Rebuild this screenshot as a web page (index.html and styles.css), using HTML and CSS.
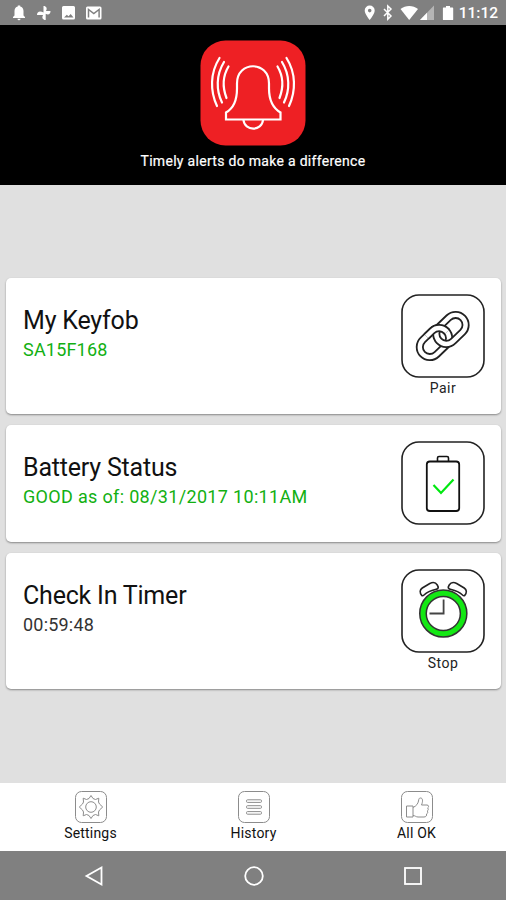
FILE: index.html
```html
<!DOCTYPE html>
<html lang="en">
  <head>
    <meta charset="UTF-8" />
    <title>Keyfob</title>
    <meta name="viewport" content="width=device-width, initial-scale=1.0" />
    <link rel="stylesheet" href="styles.css">
  </head>

  <body>
    <div class="statusbar">
      <svg width="110" height="25" viewBox="0 0 110 25" fill="#fff">
        <path d="M13 18V17l1.500-1.500v-4.500c0-2.300 1.200-4 3.300-4.500V5.500h2.400V6.500c2.100.5 3.300 2.200 3.300 4.500v4.500L25 17v1zM17.500 18.800h3a1.500 1.500 0 0 1-3 0z" />
        <path d="M43.500 12.500V6c3 0 4 2.500 2.500 5h4.500c0 3-2 4.300-4.800 2.800V20c-3 0-4.200-2.500-2.600-5H37c0-3 2.500-4.500 6.500-2.500z" />
        <path fill-rule="evenodd" d="M63.500 6h10q1.500 0 1.500 1.500v10.500q0 1.500-1.500 1.500h-10q-1.500 0-1.500-1.500V7.500q0-1.500 1.500-1.500zM64 17.500h9.500l-2.800-3.500-2.200 2.300-1.700-1.600z" />
        <rect x="86" y="6.500" width="15.500" height="13" rx="1.500" />
        <path d="M88.500 17.500v-8l5.300 4 5.300-4v8" fill="none" stroke="#808080" stroke-width="1.500" />
      </svg>
      <div class="statusbar-right">
        <svg width="96" height="25" viewBox="360 0 96 25" fill="#fff">
          <path fill-rule="evenodd" d="M369.700 5.500a5 5 0 0 1 5 5c0 3.500-5 9.500-5 9.500s-5-6-5-9.500a5 5 0 0 1 5-5zM369.700 8.800a1.800 1.800 0 1 0 0 3.600 1.800 1.800 0 0 0 0-3.600z" />
          <path d="M384 9l7 7-3.200 3.200V6l3.200 3-7 7" fill="none" stroke="#fff" stroke-width="1.500" />
          <path d="M400.500 9c5-4 12.500-4 17.500 0l-8.800 11z" />
          <path d="M434 5.500V20H420z" fill="#b5b5b5" />
          <path d="M427 12.700V20h-7z" />
          <path d="M443.500 7.500h2.500V6h4v1.500h2.500q.7 0 .7.700v11.200q0 .6-.7.600h-9q-.6 0-.6-.6V8.200q0-.7.600-.7z" />
        </svg>
        <span class="clock">11:12</span>
      </div>
    </div>

    <header class="header">
      <svg class="logo" width="106" height="106" viewBox="0 0 106 106">
        <rect x="0.500" y="0.500" width="105" height="105" rx="25" fill="#ee2024" />
        <g fill="none" stroke="#fff" stroke-width="2.200" stroke-linecap="round">
          <path d="M26 79.500v-7c9-5 11-14 11-24v-5c0-23 32-23 32 0v5c0 10 3 19 11.500 24v7z" stroke-linecap="butt" />
          <path d="M43.500 80c1 11.500 18.500 11.500 19.500 0" />
          <path d="M19.500 18c-9.500 15-9.500 33-2.500 48M24 22c-8 13-8 28-2 40.500M28.500 26.500c-6 10-6 21-2 31.500" />
          <path d="M86.500 18c9.500 15 9.500 33 2.500 48M82 22c8 13 8 28 2 40.500M77.500 26.500c6 10 6 21 2 31.500" />
        </g>
      </svg>
      <p>Timely alerts do make a difference</p>
    </header>

    <main class="content">
      <section class="card">
        <div class="info">
          <h2>My Keyfob</h2>
          <p class="green">SA15F168</p>
        </div>
        <button class="action">
          <svg width="84" height="84" viewBox="0 0 84 84" fill="none">
            <defs>
              <clipPath id="over">
                <rect x="-12" y="-20" width="30" height="20" />
              </clipPath>
            </defs>
            <rect class="frame" x="1" y="1" width="82" height="82" rx="17" />
            <g transform="translate(41.700 42) rotate(-44)">
              <g id="link">
                <rect class="outer" x="-27" y="-11" width="33" height="20" rx="10" />
                <rect class="inner" x="-27" y="-11" width="33" height="20" rx="10" />
              </g>
              <rect class="outer" x="-6" y="-9" width="33" height="20" rx="10" />
              <rect class="inner" x="-6" y="-9" width="33" height="20" rx="10" />
              <g clip-path="url(#over)"><use href="#link" /></g>
            </g>
          </svg>
          <span>Pair</span>
        </button>
      </section>

      <section class="card battery">
        <div class="info">
          <h2>Battery Status</h2>
          <p class="green date">GOOD as of: 08/31/2017 10:11AM</p>
        </div>
        <button class="action">
          <svg width="84" height="84" viewBox="0 0 84 84" fill="none">
            <rect class="frame" x="1" y="1" width="82" height="82" rx="17" />
            <rect x="25.800" y="20.500" width="32.400" height="49.500" rx="3" stroke="#111" stroke-width="1.800" />
            <path d="M36.500 20v-3q0-1.500 1.500-1.500h8q1.500 0 1.500 1.500v3" stroke="#111" stroke-width="1.600" />
            <path d="M32.500 44l7.500 8 12.500-13.500" stroke="#00e810" stroke-width="2.200" />
          </svg>
        </button>
      </section>

      <section class="card">
        <div class="info">
          <h2>Check In Timer</h2>
          <p>00:59:48</p>
        </div>
        <button class="action">
          <svg width="84" height="84" viewBox="0 0 84 84" fill="none" stroke="#222">
            <rect class="frame" x="1" y="1" width="82" height="82" rx="17" />
            <path id="bell" d="M20.800 26.500q-3.500-4.500.5-7.500l7.500-4.500q5-2.500 7.500 1.500t-2 4.500q-7 1.500-11.300 5.500-1.300 1.200-2.200.5z" stroke-width="1.600" />
            <use href="#bell" transform="matrix(-1 0 0 1 84.500 0)" />
            <circle cx="42.300" cy="44.500" r="20.300" stroke="#333" stroke-width="8" />
            <circle cx="42.300" cy="44.500" r="20.300" stroke="#14e814" stroke-width="5" />
            <path d="M42.600 30.500v14H28.500" stroke="#444" stroke-width="1.800" />
          </svg>
          <span>Stop</span>
        </button>
      </section>
    </main>

    <nav class="tabs">
      <a class="tab">
        <svg width="34" height="34" viewBox="0 0 34 34">
          <rect x="1.500" y="1.500" width="31" height="31" rx="6" />
          <circle cx="17" cy="17" r="5.300" />
          <path d="M15 8.500l2-3 2 3 2.500 1 3.300-1.300-.3 3.800 1 2 3.200 3-3.200 3-1 2 .3 3.800-3.300-1.300-2.500 1-2 3-2-3-2.500-1-3.300 1.300.3-3.800-1-2-3.200-3 3.200-3 1-2-.3-3.800 3.300 1.300z" />
        </svg>
        <span>Settings</span>
      </a>
      <a class="tab">
        <svg width="34" height="34" viewBox="0 0 34 34">
          <rect x="1.500" y="1.500" width="31" height="31" rx="6" />
          <rect x="9.500" y="9.800" width="15" height="2.600" rx="1" />
          <rect x="9.500" y="15.700" width="15" height="2.600" rx="1" />
          <rect x="9.500" y="21.600" width="15" height="2.600" rx="1" />
        </svg>
        <span>History</span>
      </a>
      <a class="tab">
        <svg width="34" height="34" viewBox="0 0 34 34">
          <rect x="1.500" y="1.500" width="31" height="31" rx="6" />
          <path d="M6.500 16h6.500v11H6.500zM13 17.500c3.500-1.500 5-4 5.500-6.500.3-2 .5-3 2-3 2.500 0 2.500 3.500 1 7h5.500c2 0 2 2.500.5 3 1.200.7 1 2.500-.3 3 1 1 .5 2.500-.7 3 .5 1.500-.5 3-2.500 3h-6c-2 0-3-1.500-5-1.500" />
        </svg>
        <span>All OK</span>
      </a>
    </nav>

    <div class="navbar">
      <svg width="20" height="22" viewBox="0 0 20 22"><path d="M17.500 2.500v17L2.500 11z" /></svg>
      <svg width="22" height="22" viewBox="0 0 22 22"><circle cx="11" cy="11" r="8.800" /></svg>
      <svg width="20" height="22" viewBox="0 0 20 22"><rect x="2" y="3" width="16" height="16" /></svg>
    </div>
  </body>
</html>
```
FILE: styles.css
```css
:root {
  --bar: #808080;
  --bg: #e0e0e0;
  --text: #111;
  --green: #12b012;
}

* {
  margin: 0;
  padding: 0;
  box-sizing: border-box;
}

body {
  height: 900px;
  display: flex;
  flex-direction: column;
  font-family: Roboto, "Liberation Sans", sans-serif;
  background: var(--bg);
  color: var(--text);
  overflow: hidden;
}

svg {
  display: block;
}

.statusbar {
  height: 25px;
  display: flex;
  justify-content: space-between;
  background: var(--bar);
  color: #fff;
}

.statusbar-right {
  display: flex;
  padding-right: 8px;
}

.clock {
  width: 42px;
  text-align: right;
  white-space: nowrap;
  font-size: 15.5px;
  font-weight: 500;
  line-height: 27px;
}

.header {
  height: 160px;
  display: flex;
  flex-direction: column;
  align-items: center;
  padding-top: 15px;
  background: #000;
  color: #fff;
}

.header p {
  margin-top: 5px;
  font-size: 14px;
  line-height: 20px;
  letter-spacing: 0.3px;
  -webkit-text-stroke: 0.2px #fff;
}

.content {
  flex: 1;
  display: flex;
  flex-direction: column;
  justify-content: center;
  gap: 11px;
  padding: 0 5px 1px 6px;
}

.card {
  height: 136px;
  display: flex;
  justify-content: space-between;
  padding: 16px 16px 0 17px;
  background: #fff;
  border-radius: 5px;
  box-shadow: 0 1px 2px rgba(0, 0, 0, 0.4);
}

.card.battery {
  height: 117px;
}

.info {
  padding-top: 12px;
}

.info h2 {
  font-size: 25px;
  font-weight: 400;
  line-height: 30px;
  letter-spacing: -0.2px;
}

.info p {
  font-size: 18px;
  line-height: 28px;
  letter-spacing: 0.2px;
  color: #333;
}

.info .green {
  color: var(--green);
}

.info .date {
  letter-spacing: 0.33px;
}

.action {
  display: flex;
  flex-direction: column;
  align-items: center;
  border: none;
  background: none;
  font: 14px/20px Roboto, "Liberation Sans", sans-serif;
  letter-spacing: 0.5px;
  color: #222;
}

.frame {
  stroke: #222;
  stroke-width: 1.6;
}

.outer {
  stroke: #222;
  stroke-width: 8;
}

.inner {
  stroke: #fff;
  stroke-width: 4.4;
}

.tabs {
  height: 68px;
  display: flex;
  justify-content: space-around;
  padding: 7px 8px 0 9px;
  background: #fff;
}

.tab {
  width: 100px;
  display: flex;
  flex-direction: column;
  align-items: center;
  font-size: 14px;
  line-height: 18px;
  letter-spacing: 0.2px;
}

.tab svg {
  fill: none;
  stroke: #8c8c8c;
  stroke-width: 1;
}

.navbar {
  height: 49px;
  display: flex;
  justify-content: space-between;
  align-items: center;
  padding: 0 83px 0 84px;
  background: var(--bar);
}

.navbar svg {
  fill: none;
  stroke: #fff;
  stroke-width: 1.8;
}
```
